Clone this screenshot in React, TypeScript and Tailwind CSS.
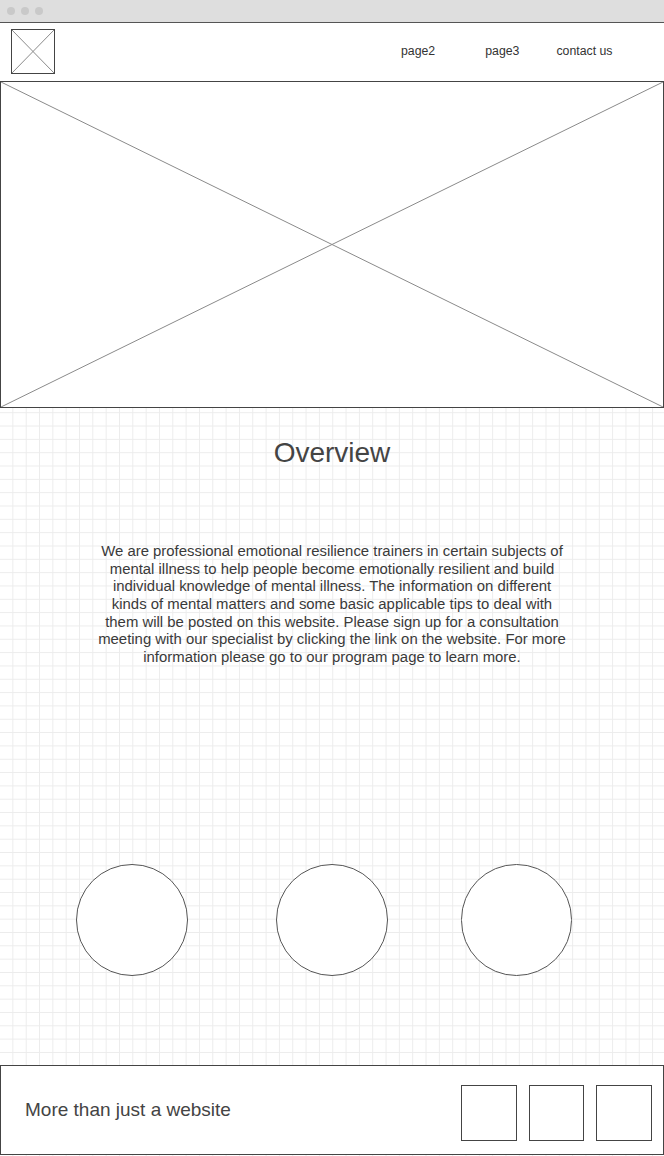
const navLinks = [
  { label: 'page2', className: 'ml-[346px]' },
  { label: 'page3', className: 'ml-[50px]' },
  { label: 'contact us', className: 'ml-[37px]' },
]

const CrossBox = ({ className }: { className: string }) => (
  <div className={`relative bg-white ${className}`}>
    <svg className="absolute inset-0 h-full w-full" viewBox="0 0 100 100" preserveAspectRatio="none">
      <line x1="0" y1="0" x2="100" y2="100" stroke="#8a8a8a" strokeWidth="1" vectorEffect="non-scaling-stroke" />
      <line x1="100" y1="0" x2="0" y2="100" stroke="#8a8a8a" strokeWidth="1" vectorEffect="non-scaling-stroke" />
    </svg>
  </div>
)

const App = () => {
  return (
    <div className="flex h-[1156px] w-[664px] flex-col overflow-hidden bg-white bg-[linear-gradient(to_right,transparent_calc(100%-1px),#ececec_calc(100%-1px)),linear-gradient(to_bottom,transparent_calc(100%-1px),#ececec_calc(100%-1px))] bg-[size:13.333px_13.333px] font-['Liberation_Sans',Arial,sans-serif] text-[#333]">
      {/* browser chrome */}
      <div className="flex h-[23px] shrink-0 items-center gap-[6px] border-b border-[#555] bg-[#dedede] pl-[7px]">
        <span className="h-[8px] w-[8px] rounded-full bg-[#c9c9c9]" />
        <span className="h-[8px] w-[8px] rounded-full bg-[#c9c9c9]" />
        <span className="h-[8px] w-[8px] rounded-full bg-[#c9c9c9]" />
      </div>

      <header className="flex h-[58px] shrink-0 items-center bg-white pb-[2px] pl-[11px]">
        <CrossBox className="h-[45px] w-[44px] border border-[#444]" />
        {navLinks.map((link) => (
          <a key={link.label} className={`text-[12.3px] text-[#333] ${link.className}`}>
            {link.label}
          </a>
        ))}
      </header>

      <CrossBox className="h-[327px] shrink-0 border border-[#444]" />

      <main className="flex flex-1 flex-col items-center">
        <h1 className="mt-[28px] text-[28px] leading-[34px] text-[#444]">Overview</h1>
        <p className="mt-[73px] w-[472px] text-center text-[14.9px] leading-[17.67px] text-[#3a3a3a]">
          We are professional emotional resilience trainers in certain subjects of mental illness to help people
          become emotionally resilient and build individual knowledge of mental illness. The information on
          different kinds of mental matters and some basic applicable tips to deal with them will be posted on this
          website. Please sign up for a consultation meeting with our specialist by clicking the link on the
          website. For more information please go to our program page to learn more.
        </p>

        <div className="mt-[197px] flex w-full">
          <div className="ml-[76px] h-[112px] w-[112px] rounded-full border border-[#555] bg-white" />
          <div className="ml-[88px] h-[112px] w-[112px] rounded-full border border-[#555] bg-white" />
          <div className="ml-[73px] h-[112px] w-[111px] rounded-full border border-[#555] bg-white" />
        </div>
      </main>

      <footer className="mb-[1px] flex h-[90px] shrink-0 items-center border border-[#444] bg-white pl-[24px] pr-[11px]">
        <p className="flex-1 text-[19px] text-[#444]">More than just a website</p>
        <div className="flex gap-[12px] pt-[6px]">
          <div className="h-[56px] w-[56px] border border-[#444]" />
          <div className="h-[56px] w-[55px] border border-[#444]" />
          <div className="h-[56px] w-[56px] border border-[#444]" />
        </div>
      </footer>
    </div>
  )
}

export default App
